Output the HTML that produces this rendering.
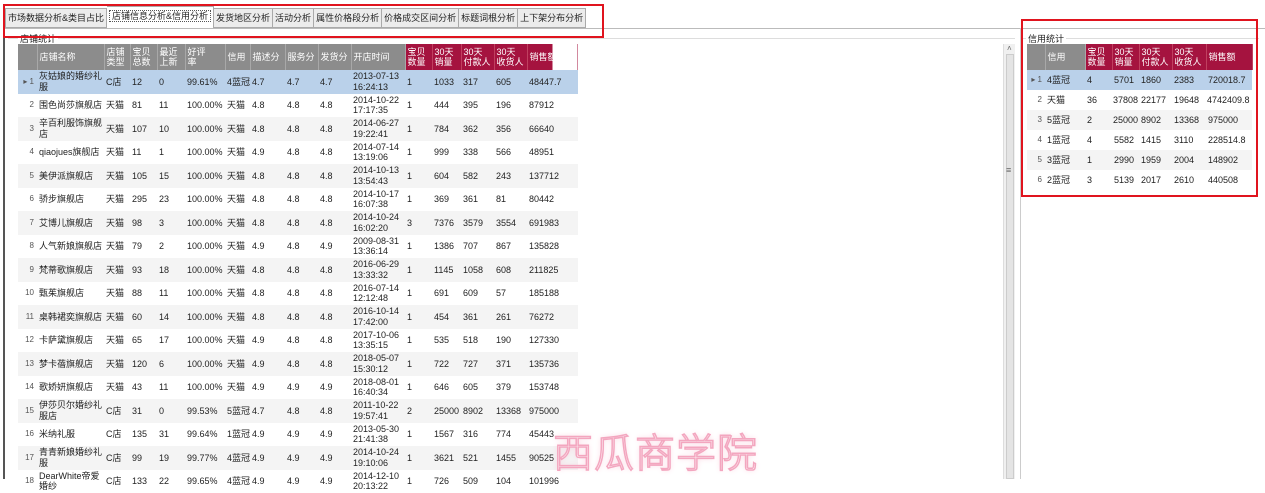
<!DOCTYPE html>
<html><head><meta charset="utf-8"><style>
*{margin:0;padding:0;box-sizing:border-box}
body{width:1265px;height:479px;overflow:hidden;background:#fff;font-family:"Liberation Sans","Noto Sans CJK SC",sans-serif;font-size:9px;color:#222;position:relative}
.tabs{position:absolute;left:5px;top:8px;height:20px;display:flex}
.tab{height:20px;border:1px solid #aaa;border-left:none;background:#ececec;padding:0 2px;line-height:18px;font-size:9px;white-space:nowrap}
.tab:first-child{border-left:1px solid #aaa}
.tab.act{background:#fff;height:22px;margin-top:-2px;border-bottom:none}
.tab.act span{border:1px dotted #555;padding:0 2px}
.redbox{position:absolute;border:2px solid #e0141e}
.win{position:absolute;left:3px;top:28px;width:1262px;height:451px;border-top:1px solid #bbb;border-left:2px solid #555}
.lbl{position:absolute;font-size:9px;background:#fff;padding:0 2px}
table{position:absolute;border-collapse:collapse;table-layout:fixed}
td,th{padding:0 2px;font-weight:normal;text-align:left;overflow:hidden;white-space:nowrap;line-height:10.5px;font-size:9px}
th{background:#8c8c8c;color:#fff;border-right:1px solid #a8a8a8;vertical-align:middle;height:26px}
th.r{background:#a5133f;border-right:1px solid #c04060}
th.last{background:linear-gradient(to right,#a5133f 25px,#fff 25px);border-right:none}
td.n{text-align:right;color:#555;font-size:8px;padding-right:3px}
tr.o td{background:#fff}
tr.e td{background:#f4f4f4}
tr.s td{background:#bad1ea}
.sb{position:absolute;background:#f0f0f0;border-left:1px solid #ddd}
.wm{position:absolute;left:553px;top:421px;font-family:"Noto Sans CJK SC",sans-serif;font-size:40px;color:#fff;-webkit-text-stroke:1.5px #f3a6bf;text-shadow:0 0 6px #f8c6d6;letter-spacing:1px;font-weight:300}
#m td{height:23.5px}
#c td{height:20px}
</style></head><body>
<div class="win"></div>
<div class="tabs">
<div class="tab">市场数据分析&amp;类目占比</div>
<div class="tab act"><span>店铺信息分析&amp;信用分析</span></div>
<div class="tab">发货地区分析</div>
<div class="tab">活动分析</div>
<div class="tab">属性价格段分析</div>
<div class="tab">价格成交区间分析</div>
<div class="tab">标题词根分析</div>
<div class="tab">上下架分布分析</div>
</div>
<div style="position:absolute;left:8px;top:38px;width:1007px;height:1px;background:#ddd"></div>
<div class="lbl" style="left:18px;top:32px">店铺统计</div>
<div style="position:absolute;left:1022px;top:38px;width:237px;height:1px;background:#ddd"></div>
<div style="position:absolute;left:1020px;top:28px;width:1px;height:451px;background:#ccc"></div>
<div class="lbl" style="left:1026px;top:32px">信用统计</div>
<div class="sb" style="left:1003px;top:44px;width:12px;height:435px"><div style="position:absolute;left:2px;top:10px;width:8px;height:425px;background:#e4e4e4;border:1px solid #ccc"></div><div style="position:absolute;left:3px;top:0;font-size:8px;color:#666">˄</div><div style="position:absolute;left:2px;top:121px;font-size:9px;color:#666">≡</div></div>

<table id="m" style="left:18px;top:44px;width:560px">
<colgroup><col style="width:19px"><col style="width:67px"><col style="width:26px"><col style="width:27px"><col style="width:28px"><col style="width:40px"><col style="width:25px"><col style="width:35px"><col style="width:33px"><col style="width:33px"><col style="width:54px"><col style="width:27px"><col style="width:29px"><col style="width:33px"><col style="width:33px"><col style="width:51px"></colgroup>
<tr><th></th><th>店铺名称</th><th>店铺<br>类型</th><th>宝贝<br>总数</th><th>最近<br>上新</th><th>好评<br>率</th><th>信用</th><th>描述分</th><th>服务分</th><th>发货分</th><th>开店时间</th><th class="r">宝贝<br>数量</th><th class="r">30天<br>销量</th><th class="r">30天<br>付款人</th><th class="r">30天<br>收货人</th><th class="last">销售额</th></tr>
<tr class="s"><td class="n">▸ 1</td><td>灰姑娘的婚纱礼<br>服</td><td>C店</td><td>12</td><td>0</td><td>99.61%</td><td>4蓝冠</td><td>4.7</td><td>4.7</td><td>4.7</td><td>2013-07-13<br>16:24:13</td><td>1</td><td>1033</td><td>317</td><td>605</td><td>48447.7</td></tr>
<tr class="o"><td class="n">2</td><td>围色尚莎旗舰店</td><td>天猫</td><td>81</td><td>11</td><td>100.00%</td><td>天猫</td><td>4.8</td><td>4.8</td><td>4.8</td><td>2014-10-22<br>17:17:35</td><td>1</td><td>444</td><td>395</td><td>196</td><td>87912</td></tr>
<tr class="e"><td class="n">3</td><td>辛百利服饰旗舰<br>店</td><td>天猫</td><td>107</td><td>10</td><td>100.00%</td><td>天猫</td><td>4.8</td><td>4.8</td><td>4.8</td><td>2014-06-27<br>19:22:41</td><td>1</td><td>784</td><td>362</td><td>356</td><td>66640</td></tr>
<tr class="o"><td class="n">4</td><td>qiaojues旗舰店</td><td>天猫</td><td>11</td><td>1</td><td>100.00%</td><td>天猫</td><td>4.9</td><td>4.8</td><td>4.8</td><td>2014-07-14<br>13:19:06</td><td>1</td><td>999</td><td>338</td><td>566</td><td>48951</td></tr>
<tr class="e"><td class="n">5</td><td>美伊派旗舰店</td><td>天猫</td><td>105</td><td>15</td><td>100.00%</td><td>天猫</td><td>4.8</td><td>4.8</td><td>4.8</td><td>2014-10-13<br>13:54:43</td><td>1</td><td>604</td><td>582</td><td>243</td><td>137712</td></tr>
<tr class="o"><td class="n">6</td><td>骄步旗舰店</td><td>天猫</td><td>295</td><td>23</td><td>100.00%</td><td>天猫</td><td>4.8</td><td>4.8</td><td>4.8</td><td>2014-10-17<br>16:07:38</td><td>1</td><td>369</td><td>361</td><td>81</td><td>80442</td></tr>
<tr class="e"><td class="n">7</td><td>艾博儿旗舰店</td><td>天猫</td><td>98</td><td>3</td><td>100.00%</td><td>天猫</td><td>4.8</td><td>4.8</td><td>4.8</td><td>2014-10-24<br>16:02:20</td><td>3</td><td>7376</td><td>3579</td><td>3554</td><td>691983</td></tr>
<tr class="o"><td class="n">8</td><td>人气新娘旗舰店</td><td>天猫</td><td>79</td><td>2</td><td>100.00%</td><td>天猫</td><td>4.9</td><td>4.8</td><td>4.9</td><td>2009-08-31<br>13:36:14</td><td>1</td><td>1386</td><td>707</td><td>867</td><td>135828</td></tr>
<tr class="e"><td class="n">9</td><td>梵蒂歌旗舰店</td><td>天猫</td><td>93</td><td>18</td><td>100.00%</td><td>天猫</td><td>4.8</td><td>4.8</td><td>4.8</td><td>2016-06-29<br>13:33:32</td><td>1</td><td>1145</td><td>1058</td><td>608</td><td>211825</td></tr>
<tr class="o"><td class="n">10</td><td>甄茱旗舰店</td><td>天猫</td><td>88</td><td>11</td><td>100.00%</td><td>天猫</td><td>4.8</td><td>4.8</td><td>4.8</td><td>2016-07-14<br>12:12:48</td><td>1</td><td>691</td><td>609</td><td>57</td><td>185188</td></tr>
<tr class="e"><td class="n">11</td><td>桌韩裙奕旗舰店</td><td>天猫</td><td>60</td><td>14</td><td>100.00%</td><td>天猫</td><td>4.8</td><td>4.8</td><td>4.8</td><td>2016-10-14<br>17:42:00</td><td>1</td><td>454</td><td>361</td><td>261</td><td>76272</td></tr>
<tr class="o"><td class="n">12</td><td>卡萨黛旗舰店</td><td>天猫</td><td>65</td><td>17</td><td>100.00%</td><td>天猫</td><td>4.9</td><td>4.8</td><td>4.8</td><td>2017-10-06<br>13:35:15</td><td>1</td><td>535</td><td>518</td><td>190</td><td>127330</td></tr>
<tr class="e"><td class="n">13</td><td>梦卡蓓旗舰店</td><td>天猫</td><td>120</td><td>6</td><td>100.00%</td><td>天猫</td><td>4.9</td><td>4.8</td><td>4.8</td><td>2018-05-07<br>15:30:12</td><td>1</td><td>722</td><td>727</td><td>371</td><td>135736</td></tr>
<tr class="o"><td class="n">14</td><td>歌娇妍旗舰店</td><td>天猫</td><td>43</td><td>11</td><td>100.00%</td><td>天猫</td><td>4.9</td><td>4.9</td><td>4.9</td><td>2018-08-01<br>16:40:34</td><td>1</td><td>646</td><td>605</td><td>379</td><td>153748</td></tr>
<tr class="e"><td class="n">15</td><td>伊莎贝尔婚纱礼<br>服店</td><td>C店</td><td>31</td><td>0</td><td>99.53%</td><td>5蓝冠</td><td>4.7</td><td>4.8</td><td>4.8</td><td>2011-10-22<br>19:57:41</td><td>2</td><td>25000</td><td>8902</td><td>13368</td><td>975000</td></tr>
<tr class="o"><td class="n">16</td><td>米纳礼服</td><td>C店</td><td>135</td><td>31</td><td>99.64%</td><td>1蓝冠</td><td>4.9</td><td>4.9</td><td>4.9</td><td>2013-05-30<br>21:41:38</td><td>1</td><td>1567</td><td>316</td><td>774</td><td>45443</td></tr>
<tr class="e"><td class="n">17</td><td>青青新娘婚纱礼<br>服</td><td>C店</td><td>99</td><td>19</td><td>99.77%</td><td>4蓝冠</td><td>4.9</td><td>4.9</td><td>4.9</td><td>2014-10-24<br>19:10:06</td><td>1</td><td>3621</td><td>521</td><td>1455</td><td>90525</td></tr>
<tr class="o"><td class="n">18</td><td>DearWhite帝爱<br>婚纱</td><td>C店</td><td>133</td><td>22</td><td>99.65%</td><td>4蓝冠</td><td>4.9</td><td>4.9</td><td>4.9</td><td>2014-12-10<br>20:13:22</td><td>1</td><td>726</td><td>509</td><td>104</td><td>101996</td></tr>
</table>

<table id="c" style="left:1027px;top:44px;width:225px">
<colgroup><col style="width:18px"><col style="width:40px"><col style="width:27px"><col style="width:27px"><col style="width:33px"><col style="width:34px"><col style="width:46px"></colgroup>
<tr><th></th><th>信用</th><th class="r">宝贝<br>数量</th><th class="r">30天<br>销量</th><th class="r">30天<br>付款人</th><th class="r">30天<br>收货人</th><th class="r">销售额</th></tr>
<tr class="s"><td class="n">▸ 1</td><td>4蓝冠</td><td>4</td><td>5701</td><td>1860</td><td>2383</td><td>720018.7</td></tr>
<tr class="o"><td class="n">2</td><td>天猫</td><td>36</td><td style="padding:0 1px">37808</td><td>22177</td><td>19648</td><td style="padding:0 1px">4742409.8</td></tr>
<tr class="e"><td class="n">3</td><td>5蓝冠</td><td>2</td><td style="padding:0 1px">25000</td><td>8902</td><td>13368</td><td>975000</td></tr>
<tr class="o"><td class="n">4</td><td>1蓝冠</td><td>4</td><td>5582</td><td>1415</td><td>3110</td><td>228514.8</td></tr>
<tr class="e"><td class="n">5</td><td>3蓝冠</td><td>1</td><td>2990</td><td>1959</td><td>2004</td><td>148902</td></tr>
<tr class="o"><td class="n">6</td><td>2蓝冠</td><td>3</td><td>5139</td><td>2017</td><td>2610</td><td>440508</td></tr>
</table>

<div class="wm">西瓜商学院</div>
<div class="redbox" style="left:3px;top:4px;width:601px;height:34px"></div>
<div class="redbox" style="left:1021px;top:19px;width:237px;height:178px"></div>
</body></html>
